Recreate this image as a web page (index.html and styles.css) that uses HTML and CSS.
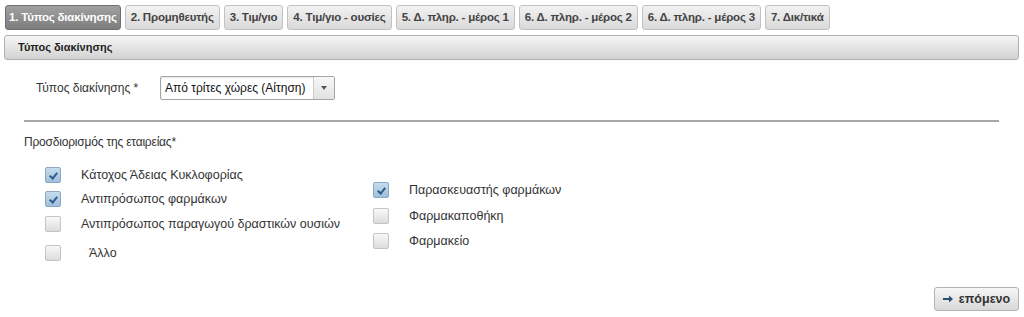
FILE: index.html
```html
<!DOCTYPE html>
<html lang="el">
<head>
    <meta charset="UTF-8">
    <title>Τύπος διακίνησης</title>
    <link rel="stylesheet" href="styles.css">
</head>
<body>
    <div class="tabs">
        <div class="tab active">1. Τύπος διακίνησης</div>
        <div class="tab">2. Προμηθευτής</div>
        <div class="tab">3. Τιμ/γιο</div>
        <div class="tab">4. Τιμ/γιο - ουσίες</div>
        <div class="tab">5. Δ. πληρ. - μέρος 1</div>
        <div class="tab">6. Δ. πληρ. - μέρος 2</div>
        <div class="tab">6. Δ. πληρ. - μέρος 3</div>
        <div class="tab">7. Δικ/τικά</div>
    </div>

    <div class="panel-header">Τύπος διακίνησης</div>

    <div class="field-row">
        <label class="field-label">Τύπος διακίνησης *</label>
        <div class="select">
            <span class="select-value">Από τρίτες χώρες (Αίτηση)</span>
            <span class="select-btn"><span class="arrow"></span></span>
        </div>
    </div>

    <hr class="divider">

    <div class="section-title">Προσδιορισμός της εταιρείας*</div>

    <div class="checks">
        <div class="check-col">
            <div class="check-row"><span class="box checked"></span><span>Κάτοχος Άδειας Κυκλοφορίας</span></div>
            <div class="check-row r2"><span class="box checked"></span><span>Αντιπρόσωπος φαρμάκων</span></div>
            <div class="check-row r3"><span class="box"></span><span>Αντιπρόσωπος παραγωγού δραστικών ουσιών</span></div>
            <div class="check-row r4"><span class="box"></span><span class="indent">Άλλο</span></div>
        </div>
        <div class="check-col col2">
            <div class="check-row"><span class="box checked"></span><span>Παρασκευαστής φαρμάκων</span></div>
            <div class="check-row r2b"><span class="box"></span><span>Φαρμακαποθήκη</span></div>
            <div class="check-row r3b"><span class="box"></span><span>Φαρμακείο</span></div>
        </div>
    </div>

    <div class="actions">
        <button class="next-btn" type="button">
            <svg class="next-arrow" width="10" height="8" viewBox="0 0 10 8"><path d="M0 3h6V0.5L10 4 6 7.5V5H0z" fill="#2a4f73"/></svg>
            <span>επόμενο</span>
        </button>
    </div>
</body>
</html>
```

FILE: styles.css
```css
body {
    margin: 0;
    font-family: "Liberation Sans", Arial, sans-serif;
    font-size: 12px;
    color: #333;
    background-color: #fff;
}

.tabs {
    display: flex;
    gap: 4px;
    padding: 5px 0 0 5px;
}

.tab {
    height: 23px;
    line-height: 23px;
    padding: 0 5px;
    border: 1px solid #c2c2c2;
    border-radius: 3px;
    background: linear-gradient(#f2f2f2, #d9d9d9);
    font-weight: bold;
    font-size: 11.5px;
    letter-spacing: -0.2px;
    color: #444;
    white-space: nowrap;
}

.tab.active {
    background: linear-gradient(#a0a0a0, #7e7e7e);
    border-color: #707070;
    color: #fff;
    padding: 0 3px;
}

.panel-header {
    margin: 5px 5px 0 4px;
    height: 23px;
    line-height: 23px;
    padding-left: 13px;
    border: 1px solid #b0b0b0;
    border-radius: 3px;
    background: linear-gradient(#f6f6f6, #d2d2d2);
    font-weight: bold;
    font-size: 11px;
    color: #222;
}

.field-row {
    display: flex;
    align-items: center;
    margin-top: 16px;
    padding-left: 36px;
}

.field-label {
    width: 124px;
}

.select {
    display: flex;
    width: 173px;
    height: 22px;
    border: 1px solid #a5a5a5;
    border-radius: 2px;
    box-shadow: inset 0 1px 2px rgba(0, 0, 0, 0.12);
}

.select-value {
    flex: 1;
    line-height: 22px;
    padding-left: 4px;
    color: #111;
}

.select-btn {
    width: 20px;
    border-left: 1px solid #ccc;
    background: linear-gradient(#f7f7f7, #e2e2e2);
    display: flex;
    align-items: center;
    justify-content: center;
}

.arrow {
    width: 0;
    height: 0;
    border-left: 3px solid transparent;
    border-right: 3px solid transparent;
    border-top: 4px solid #555;
}

.divider {
    margin: 20px 25px 0 24px;
    border: none;
    border-top: 2px solid #a6a6a6;
}

.section-title {
    margin: 13px 0 0 24px;
    letter-spacing: -0.2px;
}

.checks {
    display: flex;
    margin-top: 18px;
    padding-left: 45px;
    font-size: 12.5px;
}

.check-col {
    display: flex;
    flex-direction: column;
    width: 328px;
}

.col2 {
    padding-top: 15px;
}

.check-row {
    display: flex;
    align-items: center;
    height: 16px;
    gap: 20px;
}

.r2 {
    margin-top: 8px;
}

.r3 {
    margin-top: 9px;
}

.r4 {
    margin-top: 13px;
}

.r2b {
    margin-top: 10px;
}

.r3b {
    margin-top: 9px;
}

.indent {
    padding-left: 8px;
}

.box {
    box-sizing: border-box;
    width: 16px;
    height: 16px;
    border: 1px solid #c4c4c4;
    border-radius: 2px;
    background: linear-gradient(#f8f8f8, #dcdcdc);
    position: relative;
    flex: none;
}

.box.checked {
    border-color: #8aa8c4;
    background: linear-gradient(#c6dcee, #9ebfdc);
}

.box.checked::after {
    content: "";
    position: absolute;
    left: 5px;
    top: 3px;
    width: 3px;
    height: 6px;
    border-right: 2px solid #2c5c8c;
    border-bottom: 2px solid #2c5c8c;
    transform: rotate(40deg);
}

.actions {
    display: flex;
    justify-content: flex-end;
    margin-top: 26px;
    padding-right: 5px;
}

.next-btn {
    display: flex;
    align-items: center;
    justify-content: center;
    gap: 6px;
    width: 85px;
    height: 24px;
    border: 1px solid #b4b4b4;
    border-radius: 3px;
    background: linear-gradient(#f6f6f6, #d8d8d8);
    font-family: "Liberation Sans", Arial, sans-serif;
    font-weight: bold;
    font-size: 12.5px;
    color: #333;
    padding: 0;
}
```
